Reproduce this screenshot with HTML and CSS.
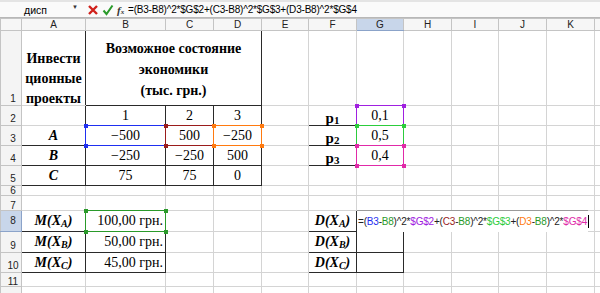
FILE: index.html
```html
<!DOCTYPE html>
<html lang="ru">
<head>
    <meta charset="UTF-8">
    <title>Лист Excel</title>
    <link rel="stylesheet" href="styles.css">
</head>
<body>

<!-- Строка формул -->
<div class="formula-bar">
    <div class="name-box">дисп<span class="drop">&#9660;</span></div>
    <div class="bar-buttons">
        <svg class="btn-icon" width="12" height="12" viewBox="0 0 12 12"><path d="M2 2 L10 10 M10 2 L2 10" stroke="#d0201a" stroke-width="2.4"/></svg>
        <svg class="btn-icon" width="12" height="12" viewBox="0 0 12 12"><path d="M1.5 6.5 L4.5 10 L10.5 1.5" stroke="#2a9a2a" stroke-width="2" fill="none"/></svg>
        <span class="fx">f<small>x</small></span>
    </div>
    <div class="formula-text">=(B3-B8)^2*$G$2+(C3-B8)^2*$G$3+(D3-B8)^2*$G$4</div>
</div>

<!-- Лист -->
<table class="sheet">
    <colgroup>
        <col class="c-head">
        <col class="c-a">
        <col class="c-b">
        <col class="c-n">
        <col class="c-n">
        <col class="c-e">
        <col class="c-n">
        <col class="c-e">
        <col class="c-n">
        <col class="c-e">
        <col class="c-n">
        <col class="c-n">
        <col class="c-n">
    </colgroup>
    <thead>
        <tr class="col-heads">
            <th class="corner"></th>
            <th>A</th><th>B</th><th>C</th><th>D</th><th>E</th><th>F</th>
            <th class="active">G</th>
            <th>H</th><th>I</th><th>J</th><th>K</th><th></th>
        </tr>
    </thead>
    <tbody>
        <tr class="r1">
            <th>1</th>
            <td class="b bl bt br lbl-invest"><div class="invest-text">Инвести<br>ционные<br>проекты</div></td>
            <td class="b ball head-state" colspan="3">Возможное состояние<br>экономики<br>(тыс. грн.)</td>
            <td></td><td></td><td></td><td></td><td></td><td></td><td></td><td></td>
        </tr>
        <tr class="r20">
            <th>2</th>
            <td class="b bl br"></td>
            <td class="b ball num">1</td>
            <td class="b ball num">2</td>
            <td class="b ball num">3</td>
            <td></td>
            <td class="b ball lbl-p">p<sub>1</sub></td>
            <td class="b ball num ref ref-purple"><span class="dot tl"></span><span class="dot tr"></span><span class="dot bl2"></span><span class="dot br2"></span>0,1</td>
            <td></td><td></td><td></td><td></td><td></td>
        </tr>
        <tr class="r20">
            <th>3</th>
            <td class="b ball lbl">A</td>
            <td class="b ball num ref ref-blue"><span class="dot tl"></span><span class="dot tr"></span><span class="dot bl2"></span><span class="dot br2"></span>&minus;500</td>
            <td class="b ball num ref ref-red"><span class="dot tl"></span><span class="dot tr"></span><span class="dot bl2"></span><span class="dot br2"></span>500</td>
            <td class="b ball num ref ref-orange"><span class="dot tl"></span><span class="dot tr"></span><span class="dot bl2"></span><span class="dot br2"></span>&minus;250</td>
            <td></td>
            <td class="b ball lbl-p">p<sub>2</sub></td>
            <td class="b ball num ref ref-green"><span class="dot tl"></span><span class="dot tr"></span><span class="dot bl2"></span><span class="dot br2"></span>0,5</td>
            <td></td><td></td><td></td><td></td><td></td>
        </tr>
        <tr class="r20">
            <th>4</th>
            <td class="b ball lbl">B</td>
            <td class="b ball num">&minus;250</td>
            <td class="b ball num">&minus;250</td>
            <td class="b ball num">500</td>
            <td></td>
            <td class="b ball lbl-p">p<sub>3</sub></td>
            <td class="b ball num ref ref-pink"><span class="dot tl"></span><span class="dot tr"></span><span class="dot bl2"></span><span class="dot br2"></span>0,4</td>
            <td></td><td></td><td></td><td></td><td></td>
        </tr>
        <tr class="r20">
            <th>5</th>
            <td class="b ball lbl">C</td>
            <td class="b ball num">75</td>
            <td class="b ball num">75</td>
            <td class="b ball num">0</td>
            <td></td><td></td><td></td><td></td><td></td><td></td><td></td><td></td>
        </tr>
        <tr class="r6">
            <th>6</th>
            <td></td><td></td><td></td><td></td><td></td><td></td><td></td><td></td><td></td><td></td><td></td><td></td>
        </tr>
        <tr class="r7">
            <th>7</th>
            <td></td><td></td><td></td><td></td><td></td><td></td><td></td><td></td><td></td><td></td><td></td><td></td>
        </tr>
        <tr class="r21">
            <th class="active">8</th>
            <td class="b ball lbl">M(X<sub>A</sub>)</td>
            <td class="b ball money ref ref-lime"><span class="dot tl"></span><span class="dot tr"></span><span class="dot bl2"></span><span class="dot br2"></span>100,00 грн.</td>
            <td></td><td></td><td></td>
            <td class="b ball lbl">D(X<sub>A</sub>)</td>
            <td class="b ball editing">
                <div class="editor"><span class="f-b">=(</span><span class="c-blue">B3</span>-<span class="c-lime">B8</span>)^2*<span class="c-purple">$G$2</span>+(<span class="c-red">C3</span>-<span class="c-lime">B8</span>)^2*<span class="c-green">$G$3</span>+(<span class="c-orange">D3</span>-<span class="c-lime">B8</span>)^2*<span class="c-pink">$G$4</span><span class="caret"></span></div>
            </td>
            <td></td><td></td><td></td><td></td><td></td>
        </tr>
        <tr class="r21">
            <th>9</th>
            <td class="b ball lbl">M(X<sub>B</sub>)</td>
            <td class="b ball money">50,00 грн.</td>
            <td></td><td></td><td></td>
            <td class="b ball lbl">D(X<sub>B</sub>)</td>
            <td class="b ball"></td>
            <td></td><td></td><td></td><td></td><td></td>
        </tr>
        <tr class="r20">
            <th>10</th>
            <td class="b ball lbl">M(X<sub>C</sub>)</td>
            <td class="b ball money">45,00 грн.</td>
            <td></td><td></td><td></td>
            <td class="b ball lbl">D(X<sub>C</sub>)</td>
            <td class="b ball"></td>
            <td></td><td></td><td></td><td></td><td></td>
        </tr>
        <tr class="r11">
            <th>11</th>
            <td></td><td></td><td></td><td></td><td></td><td></td><td></td><td></td><td></td><td></td><td></td><td></td>
        </tr>
        <tr class="r20">
            <th>12</th>
            <td></td><td></td><td></td><td></td><td></td><td></td><td></td><td></td><td></td><td></td><td></td><td></td>
        </tr>
    </tbody>
</table>

</body>
</html>
```

FILE: styles.css
```css
body {
    margin: 0;
    width: 600px;
    height: 293px;
    overflow: hidden;
    background: #fff;
    font-family: "Liberation Sans", Arial, sans-serif;
}

/* Строка формул */
.formula-bar {
    display: flex;
    align-items: center;
    height: 15px;
    border-top: 2px solid #e4e4e4;
    border-bottom: 1px solid #b8b8b8;
    background: #fafafa;
    font-size: 10px;
    color: #000;
}

.name-box {
    width: 80px;
    padding-left: 24px;
    box-sizing: border-box;
    display: flex;
    justify-content: space-between;
    font-size: 10.5px;
}

.name-box .drop {
    font-size: 6px;
    margin-right: 2px;
    color: #333;
}

.bar-buttons {
    display: flex;
    align-items: center;
    gap: 3px;
    margin-left: 7px;
    width: 41px;
}

.fx {
    font-family: "Liberation Serif", serif;
    font-style: italic;
    font-weight: bold;
    font-size: 11px;
    color: #333;
}

.fx small {
    font-size: 7px;
}

.formula-text {
    letter-spacing: -0.2px;
}

/* Лист */
.sheet {
    border-collapse: collapse;
    table-layout: fixed;
    width: 620px;
    font-family: "Liberation Serif", "Times New Roman", serif;
    font-size: 14px;
}

.c-head { width: 21px; }
.c-a { width: 64px; }
.c-b { width: 80px; }
.c-n { width: 48px; }
.c-e { width: 47px; }

.sheet td {
    border: 1px solid #d4d4d4;
    padding: 0 2px;
    white-space: nowrap;
    overflow: visible;
}

.sheet th {
    font-family: "Liberation Sans", Arial, sans-serif;
    font-weight: normal;
    font-size: 10px;
    color: #222;
    background: #f4f4f4;
    border: 1px solid #c4c4c4;
    padding: 0;
    text-align: center;
}

.col-heads th {
    height: 11px;
    line-height: 11px;
    background: #f6f6f6;
}

tbody th {
    text-align: left;
    padding-left: 4px !important;
    vertical-align: bottom;
    line-height: 12px;
}

.sheet th.active {
    background: #c8d6ea;
    border-bottom-color: #8ba3c9;
}

tbody th.active {
    border-right-color: #8ba3c9;
    vertical-align: middle;
}

.r1 { height: 75px; }
.r20 { height: 20px; }
.r21 { height: 21px; }
.r6 { height: 10px; }
.r7 { height: 15px; }
.r11 { height: 14px; }

.r6 th, .r7 th, .r11 th {
    line-height: 9px;
}

/* Таблицы с рамкой */
.sheet td.ball {
    border: 1px solid #2a2a2a;
}

.sheet td.bl { border-left: 1px solid #2a2a2a; }
.sheet td.br { border-right: 1px solid #2a2a2a; }
.sheet td.bt { border-top: 1px solid #2a2a2a; }

.lbl-invest {
    font-weight: bold;
    text-align: center;
    vertical-align: bottom;
    line-height: 20px;
}

.invest-text {
    margin-bottom: -4px;
}

.head-state {
    font-weight: bold;
    text-align: center;
    line-height: 21px;
    padding-top: 2px !important;
}

.num {
    text-align: center;
}

.lbl {
    text-align: center;
    font-weight: bold;
    font-style: italic;
}

.lbl sub {
    font-size: 10px;
    vertical-align: -2px;
    line-height: 0;
}

.lbl-p {
    text-align: center;
    font-weight: bold;
    font-size: 15px;
    line-height: 14px;
    vertical-align: bottom;
}

.lbl-p sub {
    font-size: 11px;
    vertical-align: -1px;
    line-height: 0;
}

.money {
    text-align: right;
}

/* Выделенные ссылки */
.ref {
    position: relative;
}

.ref::after {
    content: "";
    position: absolute;
    left: -1px;
    top: -1px;
    right: -1px;
    bottom: -1px;
    border: 1px solid var(--ref);
    pointer-events: none;
}

.dot {
    position: absolute;
    width: 4px;
    height: 4px;
    background: var(--ref);
    z-index: 2;
}

.dot.tl { left: -2px; top: -2px; }
.dot.tr { right: -3px; top: -2px; }
.dot.bl2 { left: -2px; bottom: -3px; }
.dot.br2 { right: -3px; bottom: -3px; }

.ref-blue { --ref: #1f2ff0; }
.ref-red { --ref: #9a1c1c; }
.ref-orange { --ref: #ff7a10; }
.ref-purple { --ref: #a020e0; }
.ref-green { --ref: #2ccc3c; }
.ref-pink { --ref: #e02aa8; }
.ref-lime { --ref: #2a9a2a; }

/* Редактирование ячейки G8 */
.editing {
    position: relative;
}

.editor {
    position: absolute;
    left: 0;
    top: -1px;
    height: 21px;
    width: 230px;
    padding-left: 1px;
    background: #fff;
    border-top: 1px solid #9a9a9a;
    font-family: "Liberation Sans", Arial, sans-serif;
    font-size: 10px;
    line-height: 21px;
    color: #222;
    letter-spacing: -0.2px;
    z-index: 3;
}

.c-blue { color: #1f2ff0; }
.c-red { color: #9a1c1c; }
.c-orange { color: #ff7a10; }
.c-purple { color: #a020e0; }
.c-green { color: #2ccc3c; }
.c-pink { color: #e02aa8; }
.c-lime { color: #2a9a2a; }

.caret {
    display: inline-block;
    width: 1px;
    height: 13px;
    background: #000;
    vertical-align: -3px;
    margin-left: 1px;
}
```
